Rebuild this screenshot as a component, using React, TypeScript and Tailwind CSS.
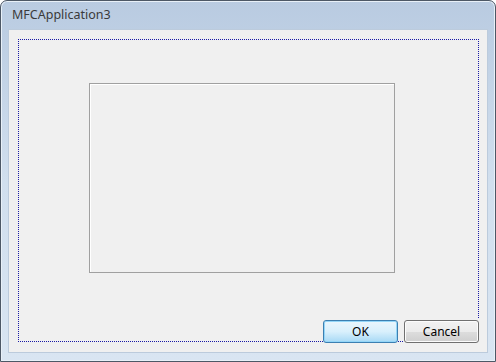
export default function App() {
  return (
    <div className="w-[496px] h-[362px] font-['Noto_Sans',sans-serif]">
      <div className="w-full h-full flex flex-col border border-[#4d5866] rounded-t-[7px] bg-gradient-to-b from-[#b9cbe1] via-[#d1dfee] to-[#d9e5f2] shadow-[inset_0_0_0_1px_#e8f0f8]">
        {/* title bar */}
        <div className="h-[28px] flex items-center px-[11px] text-[12.5px] text-[#3a3a3a]">
          MFCApplication3
        </div>

        {/* client area */}
        <div className="relative flex-1 mx-[7px] mb-[8px] bg-[#f0f0f0] border border-[#bccbdc]">
          <div className="ml-[9px] mt-[9px] w-[461px] h-[303px] border border-dotted border-[#1a1aa6]">
            <div className="ml-[70px] mt-[43px] w-[306px] h-[190px] border border-[#a0a0a0] shadow-[inset_1px_1px_0_#ffffff]" />
          </div>

          {/* buttons lie over the focus rectangle */}
          <div className="absolute left-[314px] top-[288px] flex items-start gap-[6px] text-[12px] text-black">
            <button className="mt-[2px] w-[75px] h-[23px] rounded-[3px] border border-[#3c7fb1] bg-gradient-to-b from-[#eaf6fd] via-[#d9f0fc] to-[#a7d9f5] shadow-[inset_0_0_0_1px_#94d6f8] leading-none">
              OK
            </button>
            <div className="bg-[#f0f0f0] pt-[2px] pr-[2px]">
              <button className="w-[75px] h-[23px] rounded-[3px] border border-[#707070] bg-[linear-gradient(#f2f2f2_0%,#ebebeb_50%,#dddddd_51%,#cfcfcf_100%)] shadow-[inset_0_0_0_1px_#fcfcfc] leading-none">
                Cancel
              </button>
            </div>
          </div>
        </div>
      </div>
    </div>
  );
}
